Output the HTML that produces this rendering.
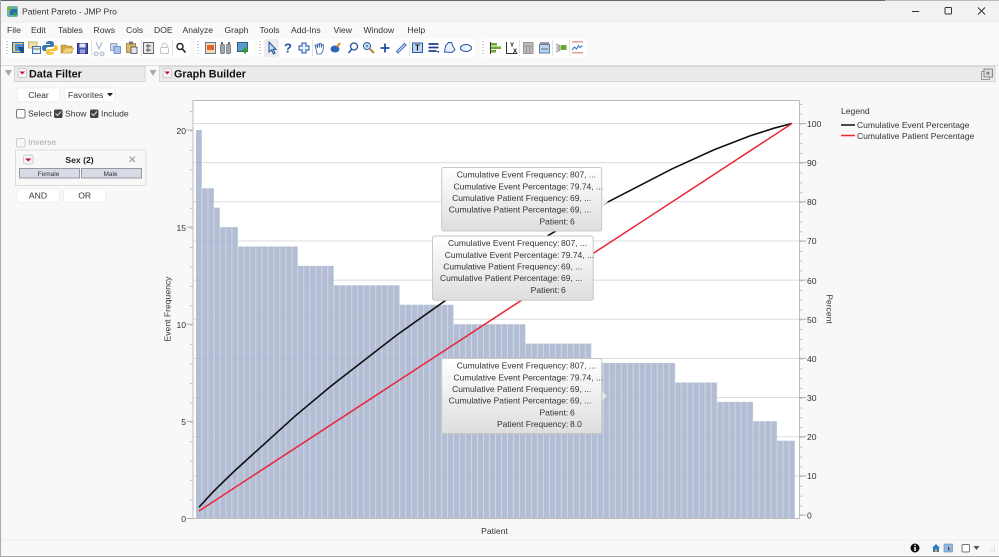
<!DOCTYPE html>
<html><head><meta charset="utf-8"><title>Patient Pareto - JMP Pro</title>
<style>
html,body{margin:0;padding:0;background:#f8f8f8;width:999px;height:557px;overflow:hidden}
svg{display:block}
text{font-family:"Liberation Sans",sans-serif;font-size:8.6px;fill:#333}
.t{font-size:8.5px}
.b{font-weight:bold;font-size:10.8px;fill:#111}
.e{text-anchor:end}.m{text-anchor:middle}
.g{fill:#aaa}
</style></head><body>
<svg width="999" height="557" viewBox="0 0 999 557" xmlns="http://www.w3.org/2000/svg">
<defs>
<clipPath id="bc"><path d="M196 518.500V130H201.990V188.300H213.970V207.700H219.960V227.100H237.930V246.500H297.830V265.900H333.770V285.300H399.660V304.800H453.570V324.200H525.450V343.600H591.340V363H675.200V382.500H717.130V401.900H753.070V421.300H777.030V440.700H795V518.500Z"/></clipPath>
<linearGradient id="tip" x1="0" y1="0" x2="0" y2="1"><stop offset="0" stop-color="#ffffff"/><stop offset="1" stop-color="#dedede"/></linearGradient>
</defs>
<!-- window -->
<rect width="999" height="557" fill="#f8f8f8"/>
<rect width="999" height="23" fill="#f2f2f2"/>
<rect y="0" width="885" height="1" fill="#666"/><rect x="885" width="114" height="1" fill="#bbb"/>
<rect y="0" width="1" height="557" fill="#aaa"/>
<rect x="1" y="23" width="998" height="42" fill="#f9f9f9"/>
<rect x="1" y="65" width="998" height="1" fill="#ddd"/>
<!-- title -->
<rect x="7" y="6" width="11" height="11" rx="2" fill="#6fb3a8"/><rect x="10" y="9" width="7" height="6" fill="#2b6cb0"/><circle cx="9.500" cy="8.500" r="2" fill="#7cb342"/><circle cx="15" cy="14" r="1.500" fill="#3aa040"/>
<text x="22" y="14.500">Patient Pareto - JMP Pro</text>
<path d="M912 11.500h7" stroke="#333" stroke-width="1"/>
<rect x="945" y="7.500" width="6.500" height="6.500" rx="1" fill="none" stroke="#333"/>
<path d="M978 7.500l7 7M985 7.500l-7 7" stroke="#333"/>
<!-- menu -->
<text x="7" y="33">File</text><text x="31" y="33">Edit</text><text x="58" y="33">Tables</text><text x="93.500" y="33">Rows</text><text x="126" y="33">Cols</text><text x="154" y="33">DOE</text><text x="182.500" y="33">Analyze</text><text x="224.500" y="33">Graph</text><text x="259.500" y="33">Tools</text><text x="291" y="33">Add-Ins</text><text x="333.500" y="33">View</text><text x="363.500" y="33">Window</text><text x="407.500" y="33">Help</text>
<!-- toolbar groups -->
<rect x="3" y="39" width="187" height="18" rx="3" fill="#fff"/>
<rect x="195" y="39" width="59" height="18" rx="3" fill="#fff"/>
<rect x="257" y="39" width="218" height="18" rx="3" fill="#fff"/>
<rect x="480" y="39" width="107" height="18" rx="3" fill="#fff"/>
<path d="M7 41v14M198 41v14M260 41v14M483 41v14" stroke="#999" stroke-width="1" stroke-dasharray="1 2"/>
<path d="M91.500 40v16M141.500 40v16M172.500 40v16M312.500 40v16M409.500 40v16M519.500 40v16M552.500 40v16M569.500 40v16" stroke="#e2e2e2"/>
<rect x="264" y="39" width="15" height="18" rx="2" fill="#ececec"/>
<!-- icons group 1 -->
<rect x="12.500" y="42.500" width="11" height="10" fill="#f3c95c" stroke="#2a6db0"/><rect x="15" y="44" width="8" height="7" fill="#4a90d0"/><path d="M18 47h6v6h-3z" fill="#1d4f8c"/>
<rect x="28.500" y="42" width="8.500" height="6" fill="#f5e0a0" stroke="#a89a60" stroke-width=".7"/><rect x="32.500" y="46.500" width="8" height="7" fill="#e4eef8" stroke="#3a6ea5"/><path d="M33 49h7" stroke="#778"/>
<path d="M50 41c-3 0-4 1-4 3h4v1h-5c-2 0-3 1-3 3s1 3 3 3h1v-2c0-1 1-2 3-2h3c1 0 2-1 2-2v-1c0-2-1-3-4-3z" fill="#3a78ae"/>
<path d="M50 55c3 0 4-1 4-3h-4v-1h5c2 0 3-1 3-3s-1-3-3-3h-1v2c0 1-1 2-3 2h-3c-1 0-2 1-2 2v1c0 2 1 3 4 3z" fill="#f3c63d"/>
<path d="M61 45h5l1 1h5v7H61z" fill="#d9a83c" stroke="#a08040" stroke-width=".6"/><path d="M62 53l3-5h9l-3 5z" fill="#f4d27a" stroke="#b8933c" stroke-width=".5"/>
<rect x="77.500" y="43.500" width="10" height="10" fill="#4a50b0" stroke="#2a2a80"/><rect x="79.500" y="43.500" width="6" height="4" fill="#dfe3f7"/><rect x="80" y="49.500" width="5" height="4" fill="#9aa3dc"/>
<path d="M96 42l3 7 3-7M96 52a1.800 1.800 0 1 0 .1 0M102 52a1.800 1.800 0 1 0 .1 0" stroke="#b5bdc9" fill="none" stroke-width="1.300"/>
<rect x="110.500" y="43.500" width="6.500" height="7" fill="#c8d6ef" stroke="#7089b8" stroke-width=".7"/><rect x="114" y="46.500" width="6.500" height="7" fill="#a9c0ea" stroke="#5677b8" stroke-width=".7"/>
<rect x="126.500" y="43.500" width="9" height="9" fill="#e0b860" stroke="#8a6a20" stroke-width=".7"/><rect x="129" y="41.500" width="4" height="3" fill="#777"/><rect x="131" y="47" width="6" height="6.500" fill="#dfe6f2" stroke="#334" stroke-width=".7"/>
<rect x="143.500" y="42.500" width="10" height="11" fill="#e8e8e8" stroke="#666"/><path d="M146 46h5M146 50h5M148 44v8" stroke="#555"/>
<rect x="160.500" y="47.500" width="8" height="6" rx="1" fill="#fff" stroke="#c4c4c4"/><path d="M162 47.500v-2a2.500 2.500 0 0 1 5 0v2" fill="none" stroke="#c4c4c4"/>
<circle cx="180" cy="46.500" r="3" fill="none" stroke="#222" stroke-width="1.400"/><path d="M182.500 49l3 3.500" stroke="#222" stroke-width="1.600"/>
<!-- group 2 -->
<rect x="205.500" y="42.500" width="10" height="11" fill="#f7d9a8" stroke="#5a77b0"/><rect x="207" y="45" width="7" height="5" fill="#e0632f"/>
<rect x="220.500" y="44.500" width="4" height="9" rx="1" fill="#a0a6ad" stroke="#666" stroke-width=".7"/><rect x="226.500" y="44.500" width="4" height="9" rx="1" fill="#a0a6ad" stroke="#666" stroke-width=".7"/><path d="M222 44v-2M229 44v-2" stroke="#333" stroke-width="1.500"/>
<rect x="237.500" y="42.500" width="10" height="9" fill="#5e9bd0" stroke="#2a6080"/><path d="M245 47.500v6M242 50.500h6" stroke="#2aa030" stroke-width="2"/>
<!-- group 3 -->
<path d="M269 42v10l2.500-2 2 4 1.500-.8-2-3.800h3z" fill="#c8dcf4" stroke="#1f4f9c"/>
<text x="288" y="52.500" class="m" style="font-size:13px;font-weight:bold;fill:#1f4fb0">?</text>
<path d="M302 43h4v3h3v4h-3v3h-4v-3h-3v-4h3z" fill="#e6effa" stroke="#1f4fb0"/>
<path d="M316 49l-1-4 1.500 0 1 3 0-4 1.500 0 .5 3.500 0-4 1.500 0 .5 4 .5-3 1.500 .5-.5 6-2 3h-4z" fill="#fff" stroke="#3060a8" stroke-width=".8"/>
<ellipse cx="335" cy="49" rx="4.500" ry="3.500" fill="#2a68c0"/><path d="M337 47l3-4" stroke="#d98a20" stroke-width="2"/>
<circle cx="354" cy="46.500" r="3.500" fill="#fff" stroke="#1f4fa8" stroke-width="1.300"/><path d="M351.500 49.500l-3 3.500" stroke="#1f4fa8" stroke-width="1.500"/>
<circle cx="367" cy="46" r="3.500" fill="#dbe8f8" stroke="#2a5aa0"/><path d="M365.500 46h3M367 44.500v3" stroke="#2a5aa0" stroke-width=".8"/><path d="M370 49l4 4" stroke="#b8862c" stroke-width="2"/>
<path d="M385 43.500v9M380.500 48h9" stroke="#1f4fa8" stroke-width="1.800"/>
<path d="M396.500 51.500l8-8 1.500 1.500-8 8z" fill="#e8f0fa" stroke="#3a68b0"/>
<rect x="412.500" y="43" width="10" height="9.500" fill="#bcd6f2" stroke="#2a5aa0"/><text x="417.500" y="50.500" class="m" style="font-size:8px;font-weight:bold;fill:#111">T</text>
<path d="M428.500 44h10M428.500 47.500h10M428.500 51h8" stroke="#1f3f90" stroke-width="1.700"/><path d="M436 51l3 0 0 2z" fill="#1f3f90"/>
<path d="M444.500 52l1-6 3-3.500h3l1.500 4 2 3-3 3z" fill="#eaf1fb" stroke="#2a5aa8"/>
<ellipse cx="466" cy="48" rx="5.500" ry="3.500" fill="#eaf1fb" stroke="#2a5aa8"/>
<!-- group 4 -->
<path d="M490.500 42v12" stroke="#333"/><rect x="491" y="43" width="6" height="2.500" fill="#6aa832"/><rect x="491" y="46.500" width="10" height="2.500" fill="#6aa832"/><rect x="491" y="50" width="5" height="2.500" fill="#6aa832"/>
<path d="M506.500 42v11.500h11" fill="none" stroke="#333"/><text x="510" y="47" style="font-size:6px;font-weight:bold;fill:#111">Y</text><text x="513" y="53" style="font-size:6px;font-weight:bold;fill:#111">X</text>
<rect x="523.500" y="42.500" width="9.500" height="11" fill="#bbb" stroke="#999"/><path d="M523.500 46h9.500M526.500 46v7M529.800 46v7" stroke="#888" stroke-width=".7"/>
<rect x="539.500" y="44.500" width="10" height="8.500" fill="#bcd4ec" stroke="#5a7ea8"/><rect x="540" y="42" width="9" height="2" fill="#999"/><path d="M541 49h7" stroke="#667"/>
<path d="M556 44l4 2v4l-4 2M556 47h4M556 49h4" fill="none" stroke="#888"/><rect x="561" y="45" width="5.500" height="5" fill="#6aa832"/>
<rect x="572" y="41" width="11" height="1.500" fill="#e79a9a"/><rect x="572" y="52" width="11" height="1.500" fill="#e79a9a"/><path d="M572 50l2.500-3 2 2 2-3.500 1.500 2 2.500-2" fill="none" stroke="#2a70c0"/>
<!-- panel headers -->
<path d="M5 70h7l-3.500 6z" fill="#aaa"/><path d="M149.500 70h7l-3.500 6z" fill="#aaa"/>
<rect x="14.500" y="66.500" width="130.500" height="15" fill="#ebebeb" stroke="#d4d4d4"/>
<rect x="159.500" y="66.500" width="835.500" height="15" fill="#ebebeb" stroke="#d4d4d4"/>
<rect x="18" y="68.500" width="8.500" height="9" rx="1.500" fill="#f6f6f6" stroke="#ccc"/><path d="M19.500 71.500h5.500l-2.750 3z" fill="#c8102e"/>
<rect x="163" y="68.500" width="8.500" height="9" rx="1.500" fill="#f6f6f6" stroke="#ccc"/><path d="M164.500 71.500h5.500l-2.750 3z" fill="#c8102e"/>
<text x="29" y="77.500" class="b">Data Filter</text>
<text x="174" y="77.500" class="b">Graph Builder</text>
<rect x="981.500" y="71.500" width="8" height="8" fill="none" stroke="#999"/><rect x="984" y="69" width="8.500" height="8" fill="#ddd" stroke="#888"/><path d="M988 71l.8 1.500h1.200l-1 1 .5 1.500-1.500-.8-1.500.8.500-1.500-1-1h1.200z" fill="#777"/>
<!-- filter controls -->
<rect x="17.500" y="88" width="42" height="14" rx="2" fill="#fff" stroke="#eee"/><text x="38.500" y="98" class="m">Clear</text>
<rect x="65" y="88" width="50" height="14" rx="2" fill="#fff" stroke="#eee"/><text x="68" y="98">Favorites</text><path d="M107 93h6l-3 3.500z" fill="#222"/>
<rect x="16.500" y="109.500" width="8.500" height="8.500" rx="1.500" fill="#fff" stroke="#777"/><text x="28" y="116.500">Select</text>
<rect x="54" y="109.500" width="8.500" height="8.500" rx="1.500" fill="#444"/><path d="M55.500 113.500l2 2 3.500-4" stroke="#ddd" fill="none"/><text x="65" y="116.500">Show</text>
<rect x="90" y="109.500" width="8.500" height="8.500" rx="1.500" fill="#444"/><path d="M91.500 113.500l2 2 3.500-4" stroke="#ddd" fill="none"/><text x="101" y="116.500">Include</text>
<rect x="16.500" y="138.500" width="8.500" height="8.500" rx="1.500" fill="#f8f8f8" stroke="#ccc"/><text x="28" y="145" class="g">Inverse</text>
<rect x="15.500" y="150" width="130.500" height="35.500" fill="#f8f8f8" stroke="#ddd"/>
<rect x="23.500" y="155" width="9.500" height="9" rx="2" fill="#f6f6f6" stroke="#ccc"/><path d="M25 158.500h6.500l-3.250 3z" fill="#c8102e"/>
<text x="79.500" y="163" class="m" style="font-weight:bold;fill:#222">Sex (2)</text>
<path d="M129.500 156.500l5.500 5.500M135 156.500l-5.500 5.500" stroke="#999" stroke-width="1.100"/>
<rect x="19.500" y="168.500" width="60" height="9.500" fill="#d6dbe7" stroke="#999"/><rect x="81.500" y="168.500" width="60" height="9.500" fill="#d6dbe7" stroke="#999"/>
<text x="48.500" y="176" class="m" style="font-size:6.500px">Female</text><text x="110.500" y="176" class="m" style="font-size:6.500px">Male</text>
<rect x="17" y="189" width="42" height="13.500" rx="2" fill="#fff" stroke="#eee"/><text x="38" y="198.500" class="m">AND</text>
<rect x="63.500" y="189" width="42.500" height="13.500" rx="2" fill="#fff" stroke="#eee"/><text x="84.700" y="198.500" class="m">OR</text>
<!-- plot -->
<rect x="193" y="100" width="606.500" height="418.500" fill="#fff"/>
<path d="M193 123.500H799M193 162.650H799M193 201.800H799M193 240.950H799M193 280.100H799M193 319.250H799M193 358.400H799M193 397.550H799M193 436.700H799M193 475.850H799" stroke="#dcdcdc" stroke-width="1"/>
<g clip-path="url(#bc)">
<rect x="196" y="130" width="599" height="388.500" fill="#a6b2cd" fill-opacity=".86"/>
<line x1="201.490" y1="324" x2="795" y2="324" stroke="#fff" stroke-opacity=".38" stroke-width="400" stroke-dasharray="1 4.990"/>
</g>
<path d="M193 100.500H799.500V518.500H193Z" fill="none" stroke="#bcbcbc"/>
<path d="M191.500 111V519" stroke="#c4c4c4" stroke-width="3" stroke-dasharray="1 18.430"/>
<path d="M186.500 130H193M186.500 227.100H193M186.500 324.200H193M186.500 421.300H193M186.500 518.500H193" stroke="#b0b0b0"/>
<path d="M801 104V516" stroke="#c4c4c4" stroke-width="3" stroke-dasharray="1 8.790"/>
<path d="M799 123.500H806M799 162.650H806M799 201.800H806M799 240.950H806M799 280.100H806M799 319.250H806M799 358.400H806M799 397.550H806M799 436.700H806M799 475.850H806M799 515H806" stroke="#b0b0b0"/>
<text x="186" y="134" class="e">20</text><text x="186" y="231" class="e">15</text><text x="186" y="328" class="e">10</text><text x="186" y="425" class="e">5</text><text x="186" y="522" class="e">0</text>
<text x="807" y="127">100</text><text x="807" y="166">90</text><text x="807" y="205">80</text><text x="807" y="244">70</text><text x="807" y="284">60</text><text x="807" y="323">50</text><text x="807" y="362">40</text><text x="807" y="401">30</text><text x="807" y="440">20</text><text x="807" y="479">10</text><text x="807" y="518.500">0</text>
<text x="0" y="0" class="m" transform="translate(170.500,309) rotate(-90)">Event Frequency</text>
<text x="0" y="0" class="m" transform="translate(826.500,309) rotate(90)">Percent</text>
<text x="494.500" y="534" class="m">Patient</text>
<!-- lines -->
<polyline fill="none" stroke="#111" stroke-width="1.600" points="199,507.260 211,494.100 217,487.900 235,470.500 294.800,416.300 330.800,386.200 396.700,335.100 450.600,296.800 522.500,250.400 588.300,212.100 672.200,168.800 714.100,149.800 750,135.900 774,128.200 792,123.500"/>
<line x1="199" y1="511" x2="792" y2="123.500" stroke="#e8283c" stroke-width="1.500"/>
<!-- legend -->
<text x="841" y="114">Legend</text>
<line x1="841" y1="125" x2="855" y2="125" stroke="#111" stroke-width="1.500"/><text x="857" y="128" class="t">Cumulative Event Percentage</text>
<line x1="841" y1="135.500" x2="855" y2="135.500" stroke="#e8283c" stroke-width="1.500"/><text x="857" y="139" class="t">Cumulative Patient Percentage</text>
<!-- tooltip 1 -->
<path d="M602 196l6 6-6 4z" fill="#f2f2f2"/>
<rect x="441.700" y="167.500" width="160" height="63.500" rx="2" fill="url(#tip)" stroke="#c8c8c8"/>
<text x="568.300" y="177.500" class="e t">Cumulative Event Frequency:</text><text x="568.300" y="189.300" class="e t">Cumulative Event Percentage:</text><text x="568.300" y="201" class="e t">Cumulative Patient Frequency:</text><text x="568.300" y="212.700" class="e t">Cumulative Patient Percentage:</text><text x="568.300" y="224.500" class="e t">Patient:</text>
<text x="570" y="177.500" class="t">807, ...</text><text x="570" y="189.300" class="t">79.74, ...</text><text x="570" y="201" class="t">69, ...</text><text x="570" y="212.700" class="t">69, ...</text><text x="570" y="224.500" class="t">6</text>
<!-- tooltip 2 -->
<path d="M593 247l-10 0 6-2z" fill="#f2f2f2"/>
<rect x="432.500" y="236" width="160.700" height="64.300" rx="2" fill="url(#tip)" stroke="#c8c8c8"/>
<text x="559.500" y="246" class="e t">Cumulative Event Frequency:</text><text x="559.500" y="257.800" class="e t">Cumulative Event Percentage:</text><text x="559.500" y="269.500" class="e t">Cumulative Patient Frequency:</text><text x="559.500" y="281.200" class="e t">Cumulative Patient Percentage:</text><text x="559.500" y="293" class="e t">Patient:</text>
<text x="561" y="246" class="t">807, ...</text><text x="561" y="257.800" class="t">79.74, ...</text><text x="561" y="269.500" class="t">69, ...</text><text x="561" y="281.200" class="t">69, ...</text><text x="561" y="293" class="t">6</text>
<!-- tooltip 3 -->
<path d="M602 391l5 5-5 5z" fill="#e4e4e4"/>
<rect x="441.700" y="358.500" width="160" height="75" rx="2" fill="url(#tip)" stroke="#c8c8c8"/>
<text x="568.300" y="368.500" class="e t">Cumulative Event Frequency:</text><text x="568.300" y="380.300" class="e t">Cumulative Event Percentage:</text><text x="568.300" y="392" class="e t">Cumulative Patient Frequency:</text><text x="568.300" y="403.700" class="e t">Cumulative Patient Percentage:</text><text x="568.300" y="415.500" class="e t">Patient:</text><text x="568.300" y="427" class="e t">Patient Frequency:</text>
<text x="570" y="368.500" class="t">807, ...</text><text x="570" y="380.300" class="t">79.74, ...</text><text x="570" y="392" class="t">69, ...</text><text x="570" y="403.700" class="t">69, ...</text><text x="570" y="415.500" class="t">6</text><text x="570" y="427" class="t">8.0</text>
<!-- status bar -->
<rect x="1" y="539.500" width="998" height="1" fill="#eee"/>
<rect x="0" y="556" width="999" height="1" fill="#aaa"/>
<circle cx="915" cy="548" r="4.500" fill="#111"/><rect x="914.300" y="547" width="1.500" height="4" fill="#fff"/><rect x="914.300" y="544.800" width="1.500" height="1.300" fill="#fff"/>
<path d="M904.500 541v14" stroke="#eee"/>
<path d="M932 548l4-4 4 4h-1v4h-6v-4z" fill="#2a80c8"/><rect x="935" y="549" width="2" height="3" fill="#e0a030"/>
<rect x="944" y="544" width="8.500" height="8" fill="#8fb8e0" stroke="#5a8ac0" stroke-width=".6"/><path d="M948 546v5l2-2z" fill="#a03030"/>
<rect x="962" y="544.500" width="7.500" height="7.500" rx="1.200" fill="#fff" stroke="#777"/>
<path d="M973.500 546h6l-3 4z" fill="#555"/>
<path d="M994 546h1M991.500 548.500h1M994 548.500h1M989 551h1M991.500 551h1M994 551h1" stroke="#c4c4c4"/>
</svg>
</body></html>
